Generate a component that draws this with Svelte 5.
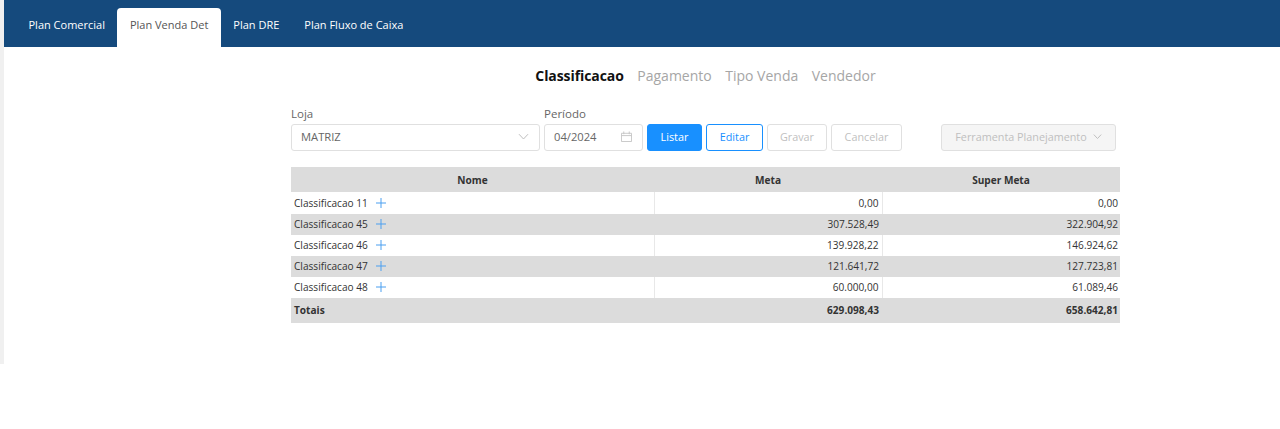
<script>
  const tabs = ["Plan Comercial", "Plan Venda Det", "Plan DRE", "Plan Fluxo de Caixa"];
  const subTabs = ["Classificacao", "Pagamento", "Tipo Venda", "Vendedor"];
  const rows = [
    { nome: "Classificacao 11", meta: "0,00", superMeta: "0,00" },
    { nome: "Classificacao 45", meta: "307.528,49", superMeta: "322.904,92" },
    { nome: "Classificacao 46", meta: "139.928,22", superMeta: "146.924,62" },
    { nome: "Classificacao 47", meta: "121.641,72", superMeta: "127.723,81" },
    { nome: "Classificacao 48", meta: "60.000,00", superMeta: "61.089,46" }
  ];
</script>

<div class="layout">
  <header class="tabbar">
    {#each tabs as tab, i}
      <div class="tab" class:active={i === 1}>{tab}</div>
    {/each}
  </header>

  <main class="panel">
    <nav class="subtabs">
      {#each subTabs as tab, i}
        <span class="subtab" class:current={i === 0}>{tab}</span>
      {/each}
    </nav>

    <div class="filters">
      <div class="field loja">
        <span class="label">Loja</span>
        <div class="input">
          <span>MATRIZ</span>
          <svg class="chev" width="11" height="11" viewBox="0 0 11 11"><path d="M1 3.2 5.5 8 10 3.2" fill="none" stroke="#bfbfbf" stroke-width="1"/></svg>
        </div>
      </div>
      <div class="field periodo">
        <span class="label">Período</span>
        <div class="input">
          <span>04/2024</span>
          <svg width="11" height="11" viewBox="0 0 12 12" fill="none" stroke="#c4c4c4"><path d="M.5 2.5h11v9H.5zM.5 5h11M3 .5v3M9 .5v3"/></svg>
        </div>
      </div>
      <button class="btn primary">Listar</button>
      <button class="btn outline">Editar</button>
      <button class="btn disabled">Gravar</button>
      <button class="btn disabled">Cancelar</button>
      <button class="btn tool">
        Ferramenta Planejamento
        <svg width="9" height="9" viewBox="0 0 11 11"><path d="M1 3.2 5.5 8 10 3.2" fill="none" stroke="#bfbfbf" stroke-width="1.2"/></svg>
      </button>
    </div>

    <table>
      <thead>
        <tr><th class="c1">Nome</th><th class="c2">Meta</th><th class="c3">Super Meta</th></tr>
      </thead>
      <tbody>
        {#each rows as row}
          <tr>
            <td class="name">
              {row.nome}
              <svg class="plus" width="10" height="10" viewBox="0 0 10 10"><path d="M5 0v10M0 5h10" stroke="#4a9ff0" stroke-width="1"/></svg>
            </td>
            <td class="num">{row.meta}</td>
            <td class="num last">{row.superMeta}</td>
          </tr>
        {/each}
      </tbody>
      <tfoot>
        <tr><td>Totais</td><td class="num">629.098,43</td><td class="num last">658.642,81</td></tr>
      </tfoot>
    </table>
  </main>
</div>

<style>
  :global(body) {
    background: #fff;
  }

  .layout {
    height: 364px;
    border-left: 4px solid #f0f0f0;
    font-family: "Open Sans", "Noto Sans", sans-serif;
    color: #333;
  }

  .tabbar {
    height: 47px;
    box-sizing: border-box;
    background: #154a7d;
    display: flex;
    align-items: flex-end;
    padding-left: 12px;
  }

  .tab {
    height: 39px;
    box-sizing: border-box;
    padding: 9px 12.5px 0;
    font-size: 11px;
    line-height: 16px;
    color: #fff;
    border-radius: 4px 4px 0 0;
  }

  .tab.active {
    background: #fff;
    color: #555;
  }

  .panel {
    width: 829px;
    margin-left: 287px;
  }

  .subtabs {
    display: flex;
    justify-content: center;
    gap: 13.5px;
    padding-top: 19px;
    height: 21px;
    font-size: 14px;
    line-height: 20px;
    color: #a6a6a6;
  }

  .subtab.current {
    font-weight: 700;
    color: #111;
    letter-spacing: -0.08px;
  }

  .filters {
    display: flex;
    align-items: flex-end;
    margin-top: 20px;
    gap: 4px;
    height: 44px;
  }

  .field {
    display: flex;
    flex-direction: column;
  }

  .loja { width: 249px; }
  .periodo { width: 99px; }

  .label {
    font-size: 11.5px;
    line-height: 16px;
    color: #666;
    margin-bottom: 2px;
  }

  .input {
    height: 27px;
    box-sizing: border-box;
    border: 1px solid #e0e0e0;
    border-radius: 3px;
    display: flex;
    align-items: center;
    justify-content: space-between;
    padding: 0 10px 2px 9px;
    font-size: 11.2px;
    color: #666;
  }

  .btn {
    height: 27px;
    box-sizing: border-box;
    border-radius: 3px;
    font-family: inherit;
    font-size: 10.8px;
    padding: 0 0 2px;
    border: 1px solid #e0e0e0;
    background: #fff;
  }

  .primary {
    width: 55px;
    background: #1890ff;
    border-color: #1890ff;
    color: #fff;
  }

  .outline {
    width: 57px;
    border-color: #1890ff;
    color: #1890ff;
  }

  .disabled {
    width: 60px;
    color: #bfbfbf;
  }

  .disabled + .disabled {
    width: 71px;
  }

  .tool {
    width: 175px;
    margin-left: 35px;
    background: #f5f5f5;
    color: #bfbfbf;
    display: flex;
    align-items: center;
    justify-content: center;
    gap: 6px;
  }

  table {
    width: 829px;
    margin-top: 16px;
    border-collapse: collapse;
    table-layout: fixed;
    font-size: 10.1px;
    color: #333;
  }

  th, tfoot td {
    background: #dcdcdc;
    font-weight: 700;
  }

  th {
    height: 25px;
    padding: 0;
    text-align: center;
  }

  .c1 { width: 363px; }
  .c2 { width: 228px; }

  td {
    height: 21px;
    padding: 0 3px 1px;
    box-sizing: border-box;
  }

  tbody tr:first-child td {
    height: 22px;
    padding-bottom: 0;
  }

  tbody tr:nth-child(even) td {
    background: #dcdcdc;
  }

  tbody tr:nth-child(odd) td + td {
    border-left: 1px solid #e8e8e8;
  }

  tfoot td {
    height: 25px;
  }

  .num {
    text-align: right;
  }

  td.last {
    padding-right: 2px;
  }

  .plus {
    margin-left: 6px;
    vertical-align: -0.5px;
  }
</style>
